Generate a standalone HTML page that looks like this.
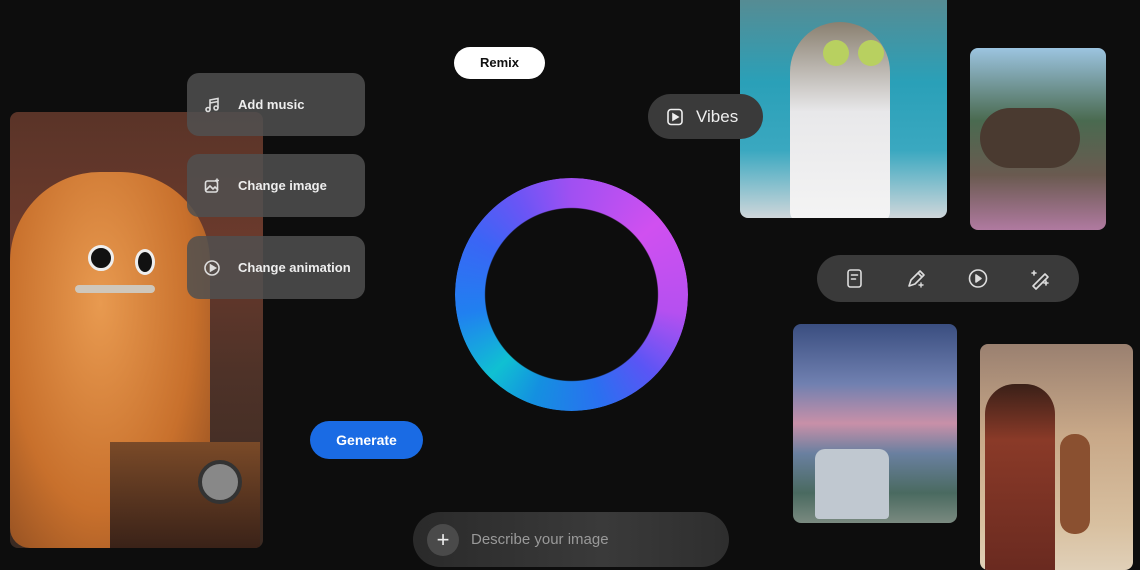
<!DOCTYPE html>
<html><head><meta charset="utf-8"><style>
*{margin:0;padding:0;box-sizing:border-box}
body{width:1140px;height:570px;background:#0d0d0d;position:relative;overflow:hidden;font-family:"Liberation Sans",sans-serif}
.a{position:absolute}
.card{position:absolute;left:187px;width:178px;height:63px;border-radius:12px;background:rgba(80,80,80,.85);color:#eee;font-size:13px;font-weight:bold;display:flex;align-items:center}
.card svg{margin-left:17px;margin-right:18px}
.img{position:absolute;border-radius:8px;overflow:hidden}
</style></head><body>
<div class="img" style="left:10px;top:112px;width:253px;height:436px;background:linear-gradient(180deg,#5a3428 0%,#6b3a2c 30%,#4e3228 60%,#3a2a22 100%)">
  <div class="a" style="left:0;top:60px;width:200px;height:376px;border-radius:90px 90px 20px 20px;background:radial-gradient(ellipse at 45% 35%,#e89a50,#c8702c 60%,#8a4a20)"></div>
  <div class="a" style="left:78px;top:133px;width:26px;height:26px;border-radius:50%;background:#111;border:3px solid #eee"></div>
  <div class="a" style="left:125px;top:137px;width:20px;height:26px;border-radius:50%;background:#111;border:3px solid #eee"></div>
  <div class="a" style="left:65px;top:173px;width:80px;height:8px;background:#cfc7bb;border-radius:4px"></div>
  <div class="a" style="left:100px;top:330px;width:150px;height:106px;background:linear-gradient(#7a4a28,#3a2218)"></div>
  <div class="a" style="left:188px;top:348px;width:44px;height:44px;border-radius:50%;background:#888;border:4px solid #333"></div>
</div>
<div class="card" style="top:73px"><svg width="16" height="16" viewBox="0 0 16 16" fill="none" stroke="#ddd" stroke-width="1.6"><circle cx="4" cy="12.5" r="2"/><circle cx="12" cy="11" r="2"/><path d="M6 12.5V3l8-1.5v9.5M6 6l8-1.5"/></svg>Add music</div>
<div class="card" style="top:154px"><svg width="16" height="16" viewBox="0 0 16 16" fill="none" stroke="#ddd" stroke-width="1.6"><rect x="1.5" y="3" width="12" height="11" rx="2"/><path d="M2 12l4-4 3 3 2-2 3 3"/><path d="M13 0.5v4M11 2.5h4"/></svg>Change image</div>
<div class="card" style="top:236px"><svg width="16" height="16" viewBox="0 0 16 16" fill="none" stroke="#ddd" stroke-width="1.6"><circle cx="8" cy="8" r="7"/><path d="M6.5 5v6l5-3z" fill="#ddd"/></svg>Change animation</div>
<div class="a" style="left:454px;top:47px;width:91px;height:32px;border-radius:16px;background:#fff;color:#111;font-size:13px;font-weight:bold;text-align:center;line-height:32px">Remix</div>
<div class="img" style="left:740px;top:-8px;width:207px;height:226px;background:linear-gradient(180deg,#5a8a90,#2aa0b8 40%,#3aa8c0 70%,#cfd6da)">
  <div class="a" style="left:50px;top:30px;width:100px;height:200px;border-radius:50px 50px 10px 10px;background:linear-gradient(#8a8070,#e8e8ea 45%,#f4f4f4)"></div>
  <div class="a" style="left:83px;top:48px;width:26px;height:26px;border-radius:50%;background:#b8d060"></div>
  <div class="a" style="left:118px;top:48px;width:26px;height:26px;border-radius:50%;background:#b8d060"></div>
</div>
<div class="a" style="left:648px;top:94px;width:115px;height:45px;border-radius:23px;background:#3a3a3a;color:#eee;font-size:17px;display:flex;align-items:center"><svg style="margin:0 12px 0 18px" width="18" height="18" viewBox="0 0 18 18" fill="none" stroke="#eee" stroke-width="1.6"><rect x="2" y="1.5" width="14" height="15" rx="3"/><path d="M7 6v6l5-3z" fill="#eee"/></svg>Vibes</div>
<div class="a" style="left:455px;top:178px;width:233px;height:233px;border-radius:50%;background:conic-gradient(from 0deg,#a050f2,#d050f0 50deg,#b550f0 100deg,#5a55f5 135deg,#2a70f0 165deg,#1490e0 200deg,#10c0d2 225deg,#2080f0 260deg,#3a65f5 300deg,#6a55f5 330deg,#a050f2);-webkit-mask:radial-gradient(circle,transparent 86px,#000 87px);mask:radial-gradient(circle,transparent 86px,#000 87px)"></div>
<div class="a" style="left:310px;top:421px;width:113px;height:38px;border-radius:19px;background:#1a6be4;color:#fff;font-size:14px;font-weight:bold;text-align:center;line-height:38px">Generate</div>
<div class="a" style="left:413px;top:512px;width:316px;height:55px;border-radius:28px;background:linear-gradient(90deg,#2a2a2a,#3a3a3a 60%,#2e2e2e);display:flex;align-items:center;color:#999;font-size:15px"><div style="width:32px;height:32px;border-radius:50%;background:#4a4a4a;margin:0 12px 0 14px;color:#eee;font-size:22px;text-align:center;line-height:31px">+</div>Describe your image</div>
<div class="img" style="left:970px;top:48px;width:136px;height:182px;background:linear-gradient(180deg,#9cc4e0,#4a6a50 40%,#6a5a50 70%,#b07aa0)">
  <div class="a" style="left:10px;top:60px;width:100px;height:60px;border-radius:30px;background:#4a3a30"></div>
</div>
<div class="a" style="left:817px;top:255px;width:262px;height:47px;border-radius:24px;background:#3a3a3a"></div>
<svg class="a" style="left:817px;top:255px" width="262" height="47" viewBox="0 0 262 47" fill="none" stroke="#ddd" stroke-width="1.6" stroke-linecap="round" stroke-linejoin="round">
<rect x="31" y="15" width="13" height="17" rx="2.5"/><path d="M34.5 20h6M34.5 24h4"/>
<path d="M92 31l2-6 9-9 4 4-9 9z M101 18l4 4"/><path d="M104 28v4M102 30h4" stroke-width="1.4"/>
<circle cx="161" cy="23.5" r="8.5"/><path d="M159 20v7l5-3.5z" fill="#ddd"/>
<path d="M216 31l12-12 3 3-12 12z"/><path d="M217 16v4M215 18h4M229 26v4M227 28h4"/>
</svg>
<div class="img" style="left:793px;top:324px;width:164px;height:199px;background:linear-gradient(180deg,#3a4e80,#7080b0 30%,#c890a8 50%,#6a80a0 65%,#4a6a60 85%,#7a8a80)">
  <div class="a" style="left:22px;top:125px;width:74px;height:70px;border-radius:10px 10px 4px 4px;background:#c0c8d0"></div>
</div>
<div class="img" style="left:980px;top:344px;width:153px;height:226px;background:linear-gradient(180deg,#9a8070,#c8a888 40%,#d8c0a0 80%,#e0d0b8)">
  <div class="a" style="left:5px;top:40px;width:70px;height:186px;border-radius:30px 30px 0 0;background:linear-gradient(#3a2018,#8a3a28 30%,#6a2a20)"></div>
  <div class="a" style="left:80px;top:90px;width:30px;height:100px;border-radius:14px;background:#8a5030"></div>
</div>
</body></html>
